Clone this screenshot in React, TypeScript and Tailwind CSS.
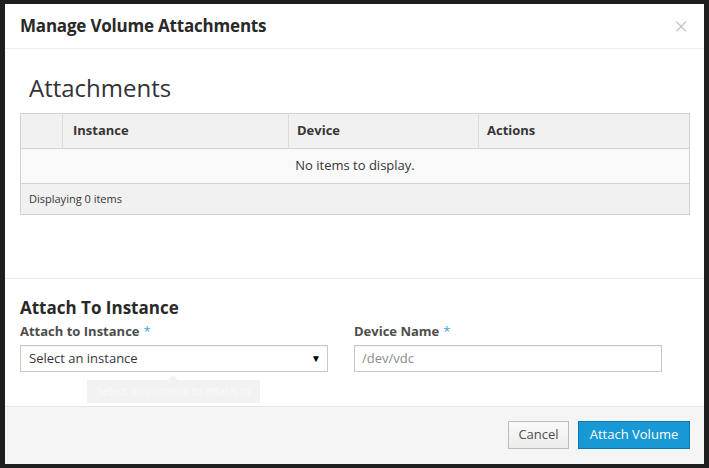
import React from 'react';

const font = { fontFamily: '"Open Sans", "Liberation Sans", sans-serif' };

function Required() {
  return <span className="ml-1 text-[#39a5dc] font-normal">*</span>;
}

export default function App() {
  return (
    <div className="h-[468px] w-[709px] bg-[#1e1e1e] px-[5px] pt-[4px] text-[#363636]" style={font}>
      <div className="flex h-[460px] w-[699px] flex-col bg-white">
        {/* header */}
        <div className="flex h-[45px] shrink-0 items-center justify-between border-b border-[#ececec] pl-[15px] pr-[16px]">
          <h4 className="text-[17px] font-bold tracking-[-0.2px] text-[#292929]">Manage Volume Attachments</h4>
          <span className="text-[24px] font-light leading-none text-[#bdbdbd]">×</span>
        </div>

        {/* attachments table */}
        <div className="h-[229px] shrink-0 px-[15px] pt-[22px]">
          <h3 className="ml-[9px] text-[24px] font-normal leading-[34px] text-[#333]">Attachments</h3>
          <table className="mt-[8px] w-[670px] border-collapse border border-[#d1d1d1] text-[13px]">
            <thead>
              <tr className="h-[35px] bg-[#f1f1f1]">
                <th className="w-[42px] border-r border-[#dcdcdc]" />
                <th className="w-[226px] border-r border-[#dcdcdc] px-[10px] text-left font-bold">Instance</th>
                <th className="w-[190px] border-r border-[#dcdcdc] px-[8px] text-left font-bold">Device</th>
                <th className="px-[8px] text-left font-bold">Actions</th>
              </tr>
            </thead>
            <tbody>
              <tr className="h-[35px] border-t border-[#d1d1d1] bg-[#f9f9f9]">
                <td colSpan={4} className="text-center text-[13px]">No items to display.</td>
              </tr>
            </tbody>
            <tfoot>
              <tr className="h-[31px] border-t border-[#d1d1d1] bg-[#f1f1f1]">
                <td colSpan={4} className="px-[8px] text-[11px]">Displaying 0 items</td>
              </tr>
            </tfoot>
          </table>
        </div>

        {/* attach form */}
        <div className="flex-1 border-t border-[#ececec] px-[15px] pt-[16px]">
          <h3 className="text-[17px] font-bold leading-[26px] text-[#292929]">Attach To Instance</h3>
          <div className="flex gap-[26px]">
            <div className="w-[308px]">
              <label className="block text-[13px] font-bold leading-[20px] text-[#4d4d4d]">
                Attach to Instance<Required />
              </label>
              <div className="mt-[4px] flex h-[27px] items-center justify-between border border-[#c8c8c8] pl-[8px] pr-[6px] text-[13px] text-[#363636] shadow-[inset_0_1px_1px_rgba(0,0,0,0.05)]">
                <span>Select an instance</span>
                <span className="text-[10px] text-black">▼</span>
              </div>
              <div className="relative ml-[67px] mt-[8px] flex h-[23px] w-[173px] items-center justify-center bg-[#f2f2f2] text-[11px] text-[#fafafa]">
                <span className="absolute -top-[5px] left-[81px] h-0 w-0 border-x-[5px] border-b-[5px] border-x-transparent border-b-[#f2f2f2]" />
                Select an instance to attach to
              </div>
            </div>
            <div className="w-[308px]">
              <label className="block text-[13px] font-bold leading-[20px] text-[#4d4d4d]">
                Device Name<Required />
              </label>
              <div className="mt-[4px] flex h-[27px] items-center border border-[#c8c8c8] pl-[7px] text-[13px] text-[#8b8b8b] shadow-[inset_0_1px_1px_rgba(0,0,0,0.05)]">
                /dev/vdc
              </div>
            </div>
          </div>
        </div>

        {/* footer */}
        <div className="flex h-[58px] shrink-0 items-start justify-end gap-[9px] border-t border-[#e5e5e5] bg-[#f5f5f5] pr-[14px] pt-[14px]">
          <button className="h-[28px] w-[61px] border border-[#bbb] bg-gradient-to-b from-[#fafafa] to-[#ededed] text-[13px] text-[#4d4d4d]">
            Cancel
          </button>
          <button className="h-[28px] w-[112px] border border-[#0a7bb1] bg-[#1898d4] text-[13px] text-white">
            Attach Volume
          </button>
        </div>
      </div>
    </div>
  );
}
